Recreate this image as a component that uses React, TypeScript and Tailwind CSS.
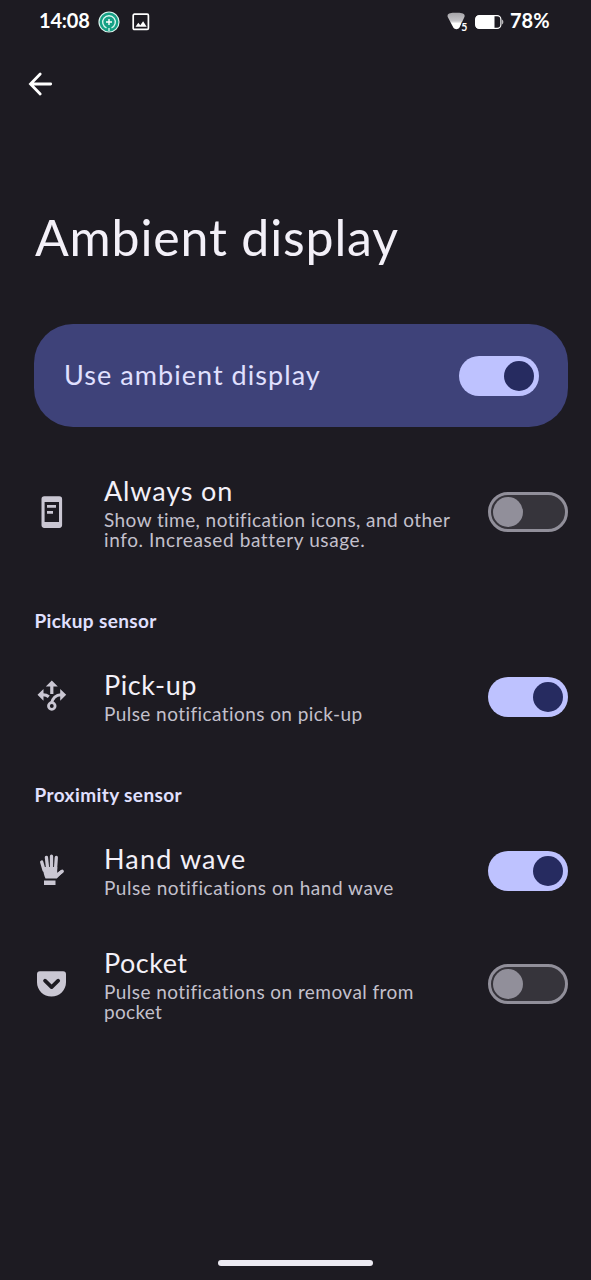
import { useState, type ReactNode } from "react";

function Switch({ initial, label }: { initial: boolean; label: string }) {
  const [on, setOn] = useState(initial);
  return (
    <button
      role="switch"
      aria-checked={on}
      aria-label={label}
      onClick={() => setOn(!on)}
      className={
        on
          ? "flex h-10 w-20 shrink-0 items-center justify-end rounded-full bg-[#bec2ff] pr-[5px]"
          : "flex h-10 w-20 shrink-0 items-center justify-start rounded-full border-[3px] border-[#918f9a] bg-[#36343b] pl-[2px]"
      }
    >
      <span className={on ? "size-[30px] rounded-full bg-[#262b60]" : "size-[30px] rounded-full bg-[#918f9a]"} />
    </button>
  );
}

function PhoneIcon() {
  return (
    <svg width="34" height="34" viewBox="0 0 34 34" fill="#cac7d3">
      <path fillRule="evenodd" d="M9.300 1.300h15a2.800 2.800 0 0 1 2.800 2.800v26a2.800 2.800 0 0 1-2.800 2.800h-15a2.800 2.800 0 0 1-2.800-2.800v-26a2.800 2.800 0 0 1 2.800-2.800zM9.600 7v20h14.400V7z" />
      <path d="M12 10h9v2.800h-9zM12 16h6v2.800h-6z" />
    </svg>
  );
}

function PickupIcon() {
  return (
    <svg width="34" height="34" viewBox="0 0 34 34" fill="#cac7d3">
      <path d="M16.800.5 22.800 6.600H10.800zM2.500 14.800l6-5.900v11.800zM31.200 14.800l-6-5.900v11.800z" />
      <path d="M16.800 6v8" stroke="#cac7d3" strokeWidth="3.200" fill="none" />
      <path d="M8 14.800c2.500 0 4.300.7 5.800 1.900M26 14.800c-4.800 0-8.600 3.400-9.600 9" stroke="#cac7d3" strokeWidth="3.100" fill="none" />
      <circle cx="16.800" cy="26" r="3.300" stroke="#cac7d3" strokeWidth="2.800" fill="none" />
    </svg>
  );
}

function HandIcon() {
  return (
    <svg width="34" height="34" viewBox="0 0 34 34" fill="#cac7d3">
      <g stroke="#cac7d3" strokeWidth="3.300" strokeLinecap="round" fill="none">
        <path d="M6.700 8 9 16M11.400 3.300l1.300 12M16.500 2.200v13M21.300 3.500l-.8 12" />
        <path d="m27.200 17.300-5.700 4.200" />
      </g>
      <path d="M7.500 13h14.700v6l4.200-3.200 2.200 2-6.800 6.700H10.500c-1.200-2.500-2-6-3-11.500zM9 26.600h11.500V31H9z" />
    </svg>
  );
}

function PocketIcon() {
  return (
    <svg width="34" height="34" viewBox="0 0 34 34">
      <path fill="#cac7d3" d="M4.900 4.200h23.200a2.900 2.900 0 0 1 2.900 2.900v8.200c0 8-6.500 14.300-14.500 14.300S2 23.300 2 15.300V7.100a2.900 2.900 0 0 1 2.900-2.900z" />
      <path d="m10 13.700 6.600 6.400 6.600-6.400" fill="none" stroke="#1d1b22" strokeWidth="3.700" strokeLinecap="round" strokeLinejoin="round" />
    </svg>
  );
}

type RowProps = {
  icon: ReactNode;
  title: string;
  titleClass: string;
  lines: { text: string; className: string }[];
  on: boolean;
  className: string;
};

function Row({ icon, title, titleClass, lines, on, className }: RowProps) {
  return (
    <div className={`flex items-center pr-[23px] pl-[35px] ${className}`}>
      <div className="w-[69px] shrink-0">{icon}</div>
      <div className={`grow whitespace-nowrap ${lines.length > 1 ? "pb-px" : "pb-[3px]"}`}>
        <h2 className={`mb-[2px] text-[27px] leading-[35px] text-[#f3f0f8] ${titleClass}`}>{title}</h2>
        {lines.map((l) => (
          <p key={l.text} className={`text-[19px] leading-5 text-[#c3c0cc] ${l.className}`}>
            {l.text}
          </p>
        ))}
      </div>
      <Switch initial={on} label={title} />
    </div>
  );
}

function StatusBar() {
  return (
    <header className="flex h-11 items-center pr-[41px] pb-[3px] pl-[39px] text-white">
      <span className="mb-[2px] w-[59px] text-[20px] font-bold tracking-[-0.200px]">14:08</span>
      <svg width="22" height="22" viewBox="0 0 22 22" className="mt-[3px]" fill="none">
        <circle cx="11" cy="11" r="10" fill="#15a085" stroke="#d8f5ee" strokeWidth="1.200" />
        <path d="M8.500 16.800A6.300 6.300 0 1 1 13.500 16.800M11 17v3" stroke="#d8f5ee" strokeWidth="1.400" />
        <path d="M11 8v6M8 11h6" stroke="white" strokeWidth="1.400" />
      </svg>
      <svg width="18" height="18" viewBox="0 0 18 18" className="mt-[3px] ml-3" fill="none">
        <rect x="1.200" y="1.200" width="15.200" height="15.200" rx="1.200" stroke="white" strokeWidth="1.700" />
        <path d="M3.500 13.700 6.300 9.800l2 2.400 2.800-4 3.600 5.500z" fill="white" />
      </svg>
      <div className="grow" />
      <svg width="22" height="20" viewBox="0 0 22 20" className="mt-[3px]">
        <defs>
          <linearGradient id="signal" x1="0" y1="0" x2="0" y2="1">
            <stop offset="0" stopColor="#a5a4a8" />
            <stop offset=".5" stopColor="#c5c4c8" />
            <stop offset=".65" stopColor="white" />
          </linearGradient>
        </defs>
        <path d="M.6 3.200C1.200 1.300 4 .7 9 .7s8 .6 8.600 2.500c.2.800 0 1.500-.4 2.300L12.500 15.500c-1.400 2.300-4.800 2.300-6.200 0L1 5.500C.6 4.700.4 4 .6 3.200z" fill="url(#signal)" />
        <text x="14.300" y="18.500" fontSize="10.500" fontWeight="700" fill="white" stroke="#1d1b22" strokeWidth="2" paintOrder="stroke">5</text>
      </svg>
      <svg width="29" height="14" viewBox="0 0 29 14" className="mt-[3px] ml-[6px]" fill="none">
        <rect x=".6" y=".6" width="25.300" height="12.800" rx="3.800" stroke="white" strokeWidth="1.200" />
        <path d="M4 .5h15.500v13H4A3.500 3.500 0 0 1 .5 10V4A3.500 3.500 0 0 1 4 .5z" fill="white" />
        <path d="M27.300 4.500c1.300 1 1.300 4 0 5z" fill="white" />
      </svg>
      <span className="mb-[2px] ml-[6px] w-10 text-[20px] font-bold">78%</span>
    </header>
  );
}

export default function App() {
  return (
    <div className="flex h-[1280px] w-[591px] flex-col overflow-hidden bg-[#1d1b22] font-['Lato',sans-serif]">
      <StatusBar />
      <nav className="flex h-20 items-center pl-[28px]">
        <button aria-label="Back">
          <svg width="25" height="24" viewBox="0 0 25 24" fill="none" stroke="white" strokeWidth="2.800" strokeLinecap="round">
            <path d="M22.700 12H3M12.200 2 2.500 12l9.700 10" />
          </svg>
        </button>
      </nav>
      <h1 className="mt-[83px] pl-[35px] text-[50px] leading-[60px] tracking-[0.850px] whitespace-nowrap text-[#f3f0f8]">Ambient display</h1>
      <section className="mt-[57px] mr-[23px] ml-[34px] flex h-[103px] items-center justify-between rounded-[39px] bg-[#3e4279] pr-[29px] pl-[30px]">
        <span className="text-[27px] tracking-[1.050px] text-[#e0e0ff]">Use ambient display</span>
        <Switch initial label="Use ambient display" />
      </section>
      <Row
        className="mt-[23px] h-[124px]"
        icon={<PhoneIcon />}
        title="Always on"
        titleClass="tracking-[0.850px]"
        lines={[
          { text: "Show time, notification icons, and other", className: "tracking-[0.420px]" },
          { text: "info. Increased battery usage.", className: "tracking-[0.600px]" },
        ]}
        on={false}
      />
      <h3 className="h-[70px] pt-[37px] pl-[34.500px] text-[19px] leading-5 font-bold tracking-[0.350px] text-[#e0e0ff]">Pickup sensor</h3>
      <Row
        className="h-[105px]"
        icon={<PickupIcon />}
        title="Pick-up"
        titleClass="tracking-[0.600px]"
        lines={[{ text: "Pulse notifications on pick-up", className: "tracking-[0.430px]" }]}
        on
      />
      <h3 className="h-[69px] pt-[36px] pl-[34.500px] text-[19px] leading-5 font-bold tracking-[0.400px] text-[#e0e0ff]">Proximity sensor</h3>
      <Row
        className="h-[105px]"
        icon={<HandIcon />}
        title="Hand wave"
        titleClass="tracking-[1.150px]"
        lines={[{ text: "Pulse notifications on hand wave", className: "tracking-[0.520px]" }]}
        on
      />
      <Row
        className="-mt-px h-[124px]"
        icon={<PocketIcon />}
        title="Pocket"
        titleClass="tracking-[0.500px]"
        lines={[
          { text: "Pulse notifications on removal from", className: "tracking-[0.440px]" },
          { text: "pocket", className: "tracking-[0.300px]" },
        ]}
        on={false}
      />
      <div className="mt-auto mb-[14px] ml-[218px] h-[6px] w-[155px] rounded-full bg-[#eceaf2]" />
    </div>
  );
}
